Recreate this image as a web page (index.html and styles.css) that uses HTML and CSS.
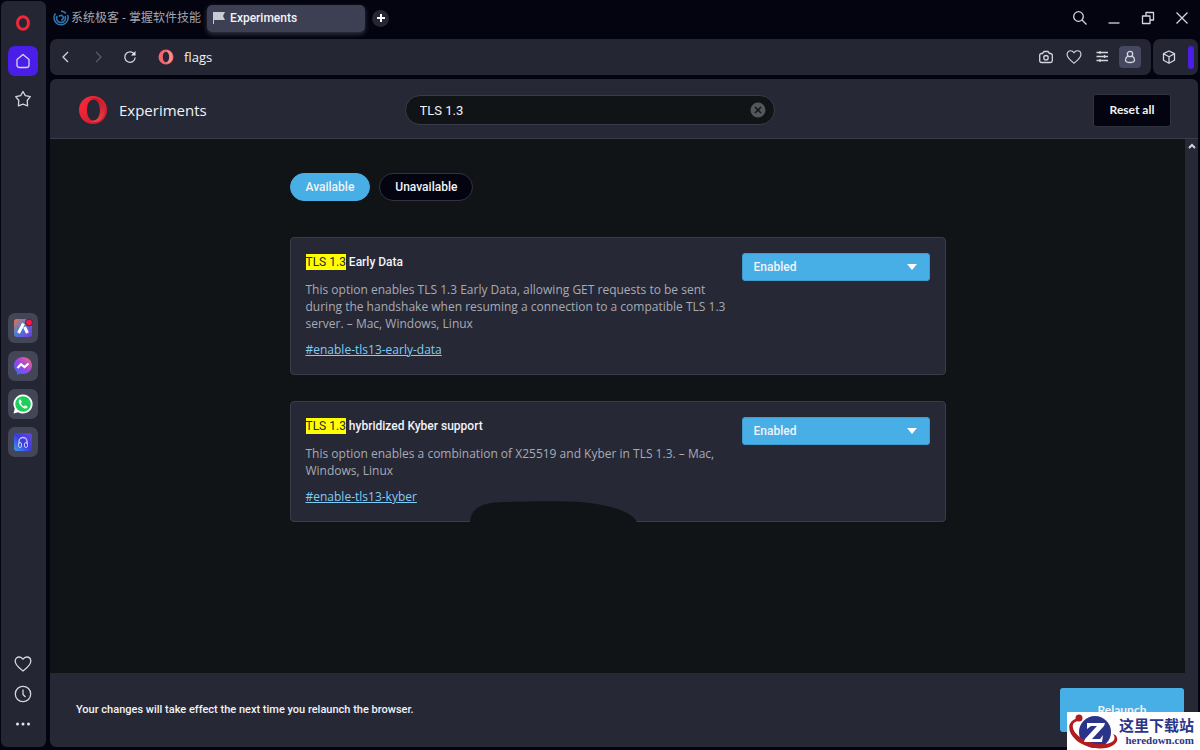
FILE: index.html
```html
<!DOCTYPE html>
<html lang="en">
<head>
    <meta charset="UTF-8">
    <meta name="viewport" content="width=device-width, initial-scale=1.0">
    <title>Experiments</title>
    <link rel="stylesheet" href="styles.css">
</head>
<body>
    <!-- shared shapes -->
    <svg class="defs" width="0" height="0" aria-hidden="true">
        <defs>
            <linearGradient id="operaRed" x1="0" y1="0" x2="1" y2="1">
                <stop offset="0" stop-color="#ff2a3c"/>
                <stop offset="1" stop-color="#c51a2c"/>
            </linearGradient>
            <linearGradient id="operaInner" x1="0" y1="0" x2="0" y2="1">
                <stop offset="0" stop-color="#a80f22"/>
                <stop offset="1" stop-color="#ff5a5a"/>
            </linearGradient>
            <linearGradient id="aria" x1="0" y1="0" x2="1" y2="1">
                <stop offset="0" stop-color="#f0704a"/>
                <stop offset="0.45" stop-color="#4a7fd0"/>
                <stop offset="1" stop-color="#7a35e0"/>
            </linearGradient>
            <linearGradient id="messenger" x1="0" y1="1" x2="1" y2="0">
                <stop offset="0" stop-color="#2b6dff"/>
                <stop offset="0.5" stop-color="#a044e8"/>
                <stop offset="1" stop-color="#ff6a6a"/>
            </linearGradient>
            <linearGradient id="player" x1="0" y1="1" x2="1" y2="0">
                <stop offset="0" stop-color="#3aa0f0"/>
                <stop offset="0.5" stop-color="#3a3ae0"/>
                <stop offset="1" stop-color="#6a48d8"/>
            </linearGradient>
        </defs>
        <symbol id="heart" viewBox="0 0 18 18">
            <path d="M9 16C6 13.5 1.2 10.200 1.200 6.200 1.200 3.700 3 2 5.200 2 6.900 2 8.200 2.900 9 4.300 9.800 2.900 11.100 2 12.800 2 15 2 16.800 3.700 16.800 6.200 16.800 10.200 12 13.500 9 16Z"/>
        </symbol>
        <symbol id="opera" viewBox="0 0 30 30">
            <path fill-rule="evenodd" fill="url(#operaRed)" d="M15 1A14 14 0 1 0 15 29A14 14 0 1 0 15 1ZM15.500 4.500C19.500 4.500 22 9 22 15S19.500 25.500 15.500 25.500 9 21 9 15 11.500 4.500 15.500 4.500Z"/>
            <path fill="url(#operaInner)" d="M12 4C18 1 27 5 27 15S18 29 12 26C19 27 22 21 22 15S19 3 12 4Z" opacity="0.6"/>
        </symbol>
    </svg>

    <div class="browser">
        <nav class="sidebar" aria-label="Sidebar">
            <div class="side-group">
                <button class="side-btn" aria-label="Opera menu">
                    <svg width="16" height="16" viewBox="0 0 16 16"><ellipse cx="8" cy="8" rx="5.500" ry="6.200" fill="none" stroke="#ee2838" stroke-width="3"/></svg>
                </button>
                <button class="side-btn active" aria-label="Home">
                    <svg class="line" width="16" height="16" viewBox="0 0 16 16"><path d="M2 6.500 8 1.500 14 6.500V12A2.500 2.500 0 0 1 11.500 14.500H4.500A2.500 2.500 0 0 1 2 12Z"/></svg>
                </button>
                <button class="side-btn" aria-label="Speed dials">
                    <svg class="line" width="18" height="18" viewBox="0 0 18 18"><path d="M9 1.500 11.300 5.600 16.300 6.700 13.200 10.500 13.600 15.800 9 14.200 4.400 15.800 4.800 10.500 1.700 6.700 6.700 5.600Z"/></svg>
                </button>
            </div>
            <div class="side-group apps">
                <button class="side-btn app" aria-label="Aria">
                    <svg width="20" height="20" viewBox="0 0 20 20">
                        <rect x="1" y="1" width="18" height="18" rx="3" fill="url(#aria)"/>
                        <path d="M5.500 15 10.500 5.500M11.500 9 14.500 15" fill="none" stroke="#fff" stroke-width="3"/>
                        <circle cx="16" cy="4.500" r="3.500" fill="#f01e46" stroke="#4a2440"/>
                    </svg>
                </button>
                <button class="side-btn app" aria-label="Messenger">
                    <svg width="20" height="20" viewBox="0 0 20 20">
                        <path d="M10 1C4.800 1 1 4.700 1 9.500 1 12 2 14.200 3.800 15.700L4 19 7 17.700C8 18 9 18 10 18 15.200 18 19 14.300 19 9.500S15.200 1 10 1Z" fill="url(#messenger)"/>
                        <path d="M4.500 12 8 8.200 11.500 11 15.500 7.500" fill="none" stroke="#fff" stroke-width="2.200"/>
                    </svg>
                </button>
                <button class="side-btn app" aria-label="WhatsApp">
                    <svg width="20" height="20" viewBox="0 0 20 20">
                        <path d="M10 .5A9.500 9.500 0 0 0 1.800 14.800L.5 19.500 5.300 18.200A9.500 9.500 0 1 0 10 .5Z" fill="#fff"/>
                        <circle cx="10" cy="10" r="7.800" fill="#1ccf5a"/>
                        <path d="M6.500 5.500C5 7 5.700 9.500 8 12S13 15.500 14.500 13.500L14.200 12.200 12 11.200 11 12.400C9.500 11.800 8.400 10.700 7.800 9.200L8.800 8.200 8 5.700Z" fill="#fff"/>
                    </svg>
                </button>
                <button class="side-btn app" aria-label="Player">
                    <svg width="20" height="20" viewBox="0 0 20 20">
                        <rect x="1" y="1" width="18" height="18" rx="3" fill="url(#player)"/>
                        <path d="M6 12V9.500A4 4 0 0 1 14 9.500V12" fill="none" stroke="#c8c4f4" stroke-width="1.300"/>
                        <rect x="5.500" y="10.500" width="3" height="5" rx="1.500" fill="none" stroke="#c8c4f4"/>
                        <rect x="11.500" y="10.500" width="3" height="5" rx="1.500" fill="none" stroke="#c8c4f4"/>
                    </svg>
                </button>
            </div>
            <div class="side-group bottom">
                <button class="side-btn" aria-label="Bookmarks">
                    <svg class="line" width="18" height="18"><use href="#heart"/></svg>
                </button>
                <button class="side-btn" aria-label="History">
                    <svg class="line" width="18" height="18" viewBox="0 0 18 18"><circle cx="9" cy="9" r="7.700"/><path d="M9 4.500V9.500L11.500 12"/></svg>
                </button>
                <button class="side-btn" aria-label="More">
                    <svg width="18" height="18" viewBox="0 0 18 18" fill="#e4e6ee"><circle cx="3.500" cy="9" r="1.500"/><circle cx="9" cy="9" r="1.500"/><circle cx="14.500" cy="9" r="1.500"/></svg>
                </button>
            </div>
        </nav>

        <div class="window">
            <div class="tabs">
                <button class="tab">
                    <svg width="16" height="16" viewBox="0 0 16 16" fill="none" stroke="#2f74ad" stroke-width="1.700">
                        <path d="M2.500 3.500A7 7 0 1 0 14.500 5"/><path d="M13 3.500A6.500 6.500 0 0 0 8 1.200"/><path d="M4 6A4.500 4.500 0 1 0 12 6"/><path d="M6 6.500A2.300 2.300 0 1 1 8 10"/>
                    </svg>
                    系统极客 - 掌握软件技能
                </button>
                <button class="tab current">
                    <svg width="14" height="14" viewBox="0 0 14 14" fill="#c8cad4"><path d="M1 1H2V13H1ZM2 1H13L11 5 13 9H2Z"/></svg>
                    Experiments
                </button>
                <button class="new-tab" aria-label="New tab">
                    <svg width="10" height="10" viewBox="0 0 10 10" stroke="#fff" stroke-width="2"><path d="M5 1V9M1 5H9"/></svg>
                </button>
                <div class="window-controls">
                    <button aria-label="Search tabs"><svg class="line" width="16" height="16" viewBox="0 0 16 16"><circle cx="6.500" cy="6.500" r="4.800"/><path d="M10 10 14.500 14.500"/></svg></button>
                    <button aria-label="Minimize"><svg class="line" width="16" height="16" viewBox="0 0 16 16"><path d="M2.500 13H13.500"/></svg></button>
                    <button aria-label="Restore"><svg class="line" width="16" height="16" viewBox="0 0 16 16"><path d="M2.500 6H10V13.500H2.500ZM6 6V2.500H13.500V10H10"/></svg></button>
                    <button aria-label="Close"><svg class="line" width="16" height="16" viewBox="0 0 16 16"><path d="M2.500 2.500 13.500 13.500M13.500 2.500 2.500 13.500"/></svg></button>
                </div>
            </div>

            <div class="toolbar">
                <div class="address">
                    <button aria-label="Back"><svg class="line" width="16" height="16" viewBox="0 0 16 16"><path d="M10 3 5 8 10 13"/></svg></button>
                    <button class="off" aria-label="Forward" disabled><svg class="line" width="16" height="16" viewBox="0 0 16 16"><path d="M6 3 11 8 6 13"/></svg></button>
                    <button aria-label="Reload"><svg class="line" width="16" height="16" viewBox="0 0 16 16"><path d="M12.800 6A5.200 5.200 0 1 0 13.200 8.500"/><path d="M13.500 2V6.500H9Z" fill="#e4e6ee" stroke="none"/></svg></button>
                    <svg class="site-icon" width="16" height="16" viewBox="0 0 16 16"><path fill="#f4646c" fill-rule="evenodd" d="M8 .5A7.500 7.500 0 1 0 8 15.500 7.500 7.500 0 1 0 8 .5ZM8 2.800C10 2.800 11.200 5 11.200 8S10 13.200 8 13.200 4.800 11 4.800 8 6 2.800 8 2.800Z"/><path fill="#f7a6a4" opacity="0.6" d="M8 2C12 1 14.500 4.500 14.500 8S12 15 8 14C10 13.200 11.200 11 11.200 8S10 2.800 8 2Z"/></svg>
                    <span class="url">flags</span>
                    <div class="address-tools">
                        <button aria-label="Snapshot"><svg class="line" width="16" height="16" viewBox="0 0 16 16"><path d="M3.500 4.500H4.500L6 2.500H10L11.500 4.500H12.500A1.800 1.800 0 0 1 14.300 6.300V11.700A1.800 1.800 0 0 1 12.500 13.500H3.500A1.800 1.800 0 0 1 1.700 11.700V6.300A1.800 1.800 0 0 1 3.500 4.500Z"/><circle cx="8" cy="8.700" r="2.200"/></svg></button>
                        <button aria-label="Add to bookmarks"><svg class="line" width="16" height="16"><use href="#heart"/></svg></button>
                        <button aria-label="Easy setup"><svg class="line" width="16" height="16" viewBox="0 0 16 16"><path d="M2.500 3.500H14M2.500 7.500H14M2.500 11.500H14M6 2V5M10.500 6V9M6 10V13"/></svg></button>
                        <button class="profile" aria-label="Profile"><svg class="line" width="16" height="16" viewBox="0 0 16 16"><circle cx="8" cy="5" r="2.700"/><path d="M6 7.200C4.300 8 3.500 9.300 3.500 11 3.500 12.800 4.800 13.500 8 13.500S12.500 12.800 12.500 11C12.500 9.300 11.700 8 10 7.200"/></svg></button>
                    </div>
                </div>
                <div class="extensions">
                    <button aria-label="Extensions"><svg class="line" width="16" height="16" viewBox="0 0 16 16"><path d="M8 2 13.500 4.700V11.200L8 14.200 2.500 11.200V4.700ZM2.500 4.700 8 7.700 13.500 4.700M8 7.700V14.200"/></svg></button>
                    <span class="mark"></span>
                </div>
            </div>

            <div class="page">
                <header class="header">
                    <div class="brand">
                        <svg width="30" height="30"><use href="#opera"/></svg>
                        <h1>Experiments</h1>
                    </div>
                    <div class="search">
                        <input type="text" aria-label="Search flags" value="TLS 1.3">
                        <button aria-label="Clear search">
                            <svg width="16" height="16" viewBox="0 0 16 16"><circle cx="8" cy="8" r="7.500" fill="#54565b"/><path d="M5 5 11 11M11 5 5 11" stroke="#111416" stroke-width="1.500"/></svg>
                        </button>
                    </div>
                    <button class="reset">Reset all</button>
                </header>

                <div class="body">
                    <main class="content">
                        <div class="filters">
                            <button class="pill selected">Available</button>
                            <button class="pill">Unavailable</button>
                        </div>

                        <section class="card">
                            <div class="info">
                                <h2><mark>TLS 1.3</mark> Early Data</h2>
                                <p>This option enables TLS 1.3 Early Data, allowing GET requests to be sent during the handshake when resuming a connection to a compatible TLS 1.3 server. – Mac, Windows, Linux</p>
                                <a href="#enable-tls13-early-data" id="enable-tls13-early-data">#enable-tls13-early-data</a>
                            </div>
                            <div class="select">
                                <select aria-labelledby="enable-tls13-early-data">
                                    <option>Default</option>
                                    <option selected>Enabled</option>
                                    <option>Disabled</option>
                                </select>
                            </div>
                        </section>

                        <section class="card">
                            <div class="info">
                                <h2><mark>TLS 1.3</mark> hybridized Kyber support</h2>
                                <p>This option enables a combination of X25519 and Kyber in TLS 1.3. – Mac, Windows, Linux</p>
                                <a href="#enable-tls13-kyber" id="enable-tls13-kyber">#enable-tls13-kyber</a>
                            </div>
                            <div class="select">
                                <select aria-labelledby="enable-tls13-kyber">
                                    <option>Default</option>
                                    <option selected>Enabled</option>
                                    <option>Disabled</option>
                                </select>
                            </div>
                            <svg class="blot" width="170" height="23" viewBox="0 0 170 23"><path fill="#111416" d="M1 23C1 12 8 5 22 3 40 1 90 1 112 2 140 4 166 13 168 23Z"/></svg>
                        </section>
                    </main>
                    <div class="scrollbar">
                        <svg width="8" height="6" viewBox="0 0 8 6" fill="none" stroke="#d0d2da" stroke-width="2"><path d="M1 5 4 2 7 5"/></svg>
                    </div>
                </div>

                <footer class="footer">
                    <p>Your changes will take effect the next time you relaunch the browser.</p>
                    <button class="relaunch">Relaunch</button>
                </footer>
            </div>
        </div>
    </div>

    <div class="watermark">
        <svg width="52" height="38" viewBox="0 0 52 38">
            <circle cx="28" cy="20" r="16" fill="#2b3488"/>
            <path d="M12 6C0 8-1 19 9 28 20 38 45 40 50 29 51 25 49 23 46 22 50 27 46 32 37 32 24 33 8 25 6 16 5 11 8 9 13 9Z" fill="#b01c20"/>
            <circle cx="12" cy="6" r="3.500" fill="#b01c20"/>
            <path d="M20 11H38L37 14 25 27H33L36 23 35 30H17L18 27 30 14H24L20 17Z" fill="#fff"/>
        </svg>
        <div class="watermark-text">
            <span class="name">这里下载站</span>
            <span class="domain">heredown.com</span>
        </div>
    </div>
</body>
</html>
```
FILE: styles.css
```css
* {
    box-sizing: border-box;
}
body {
    margin: 0;
    background: #03040f;
    color: #f2f3f7;
    font-family: "Open Sans", "Noto Sans", "Noto Sans CJK SC", sans-serif;
    font-size: 12px;
    line-height: 18px;
}
h1, h2, p {
    margin: 0;
}
button {
    display: flex;
    align-items: center;
    justify-content: center;
    padding: 0;
    border: none;
    background: none;
    color: inherit;
    font: inherit;
    cursor: pointer;
}
.defs {
    position: absolute;
}
.line {
    fill: none;
    stroke: #d4d6de;
    stroke-width: 1.3;
    stroke-linejoin: round;
}
.browser {
    display: flex;
    gap: 4px;
    height: 100vh;
    padding: 0 2px 3px 1px;
}

/* sidebar */
.sidebar {
    display: flex;
    flex-direction: column;
    justify-content: space-between;
    width: 45px;
    margin-top: 1px;
    padding: 7px 1px 8px 0;
    border-radius: 6px;
    background: #242733;
}
.side-group {
    display: flex;
    flex-direction: column;
    align-items: center;
    gap: 8px;
}
.side-group.bottom {
    gap: 0;
}
.side-group.apps {
    padding-top: 7px;
}
.side-btn {
    width: 30px;
    height: 30px;
    border-radius: 7px;
}
.side-btn.active {
    background: #4a1ee8;
}
.side-btn.app {
    background: #434657;
}

/* tabs */
.window {
    display: flex;
    flex: 1;
    flex-direction: column;
    min-width: 0;
}
.tabs {
    display: flex;
    align-items: center;
    height: 39px;
    padding: 0 8px 3px 3px;
}
.tab {
    justify-content: flex-start;
    gap: 2px;
    height: 27px;
    margin-right: 6px;
    color: #a4a7b2;
}
.tab.current {
    gap: 4px;
    width: 158px;
    margin-right: 7px;
    padding: 0 5px;
    border-radius: 5px;
    background: #3d3f52;
    box-shadow: 0 2px 5px #343648;
    color: #f2f3f7;
    font-family: "Roboto", "Open Sans", sans-serif;
    font-weight: 500;
}
.new-tab {
    width: 17px;
    height: 17px;
    border-radius: 50%;
    background: #242733;
}
.window-controls {
    display: flex;
    gap: 18px;
    margin-left: auto;
}

/* address bar */
.toolbar {
    display: flex;
    gap: 2px;
    height: 36px;
    margin-bottom: 4px;
}
.address, .extensions {
    display: flex;
    align-items: center;
    border-radius: 7px;
    background: #242733;
}
.address {
    flex: 1;
    gap: 16px;
    padding: 0 10px 0 8px;
}
.off {
    opacity: 0.3;
}
.site-icon {
    margin-left: 4px;
}
.url {
    margin-left: -6px;
    font-size: 13px;
}
.address-tools {
    display: flex;
    align-items: center;
    gap: 12px;
    margin-left: auto;
}
.profile {
    width: 22px;
    height: 22px;
    margin-left: -3px;
    border-radius: 4px;
    background: #454860;
}
.extensions {
    justify-content: space-between;
    width: 45px;
    padding: 0 4px 0 8px;
}
.mark {
    width: 6px;
    height: 23px;
    border-radius: 3px;
    background: #4a1ee8;
}

/* page */
.page {
    display: flex;
    flex: 1;
    flex-direction: column;
    min-height: 0;
    overflow: hidden;
    border-radius: 6px;
    background: #262836;
}
/* the field sits left of centre, toward the brand */
.header {
    display: grid;
    grid-template-columns: 14fr 370px 17fr;
    align-items: center;
    height: 60px;
    padding: 3px 27px 0 28px;
    border-bottom: 1px solid #3a3d49;
}
.brand {
    display: flex;
    align-items: center;
    gap: 11px;
}
.brand h1 {
    font-size: 15px;
    font-weight: 400;
}
.search {
    display: flex;
    align-items: center;
    height: 30px;
    padding: 0 8px 0 14px;
    border: 1px solid #3a3d49;
    border-radius: 15px;
    background: #111416;
}
.search input {
    flex: 1;
    min-width: 0;
    padding: 0;
    border: none;
    outline: none;
    background: none;
    color: #f2f3f7;
    font: 13px "Roboto", Arial, sans-serif;
}
.reset {
    justify-self: end;
    width: 78px;
    height: 33px;
    border: 1px solid #30333f;
    border-radius: 3px;
    background: #03040f;
    font-family: "Lato", "Open Sans", sans-serif;
    font-weight: 700;
}
.body {
    display: flex;
    flex: 1;
    min-height: 0;
    background: #111416;
}
.content {
    flex: 1;
    padding: 34px 0;
}
.filters, .card {
    width: 656px;
    max-width: 100%;
    margin: 0 auto;
}
.filters {
    display: flex;
    gap: 9px;
    margin-bottom: 36px;
}
.pill {
    height: 28px;
    padding: 0 15px;
    border: 1px solid #343240;
    border-radius: 14px;
    background: #03040f;
    font-family: "Roboto", Arial, sans-serif;
    font-weight: 500;
}
.pill.selected {
    border-color: #47aee6;
    background: #47aee6;
}
.card {
    position: relative;
    display: flex;
    align-items: flex-start;
    justify-content: space-between;
    margin-bottom: 26px;
    padding: 15px;
    border: 1px solid #3a3d49;
    border-radius: 4px;
    background: #262836;
}
.info {
    display: flex;
    flex-direction: column;
    align-items: flex-start;
    gap: 9px;
    width: 424px;
}
.info h2 {
    font-family: "Roboto", "Open Sans", sans-serif;
    font-size: 12px;
    line-height: 19px;
    font-weight: 500;
}
.info mark {
    padding: 1px 0;
    background: #ff0;
    color: #252835;
    font-weight: 400;
}
.info p {
    color: #a8abb4;
    line-height: 17px;
}
.info a {
    color: #7fcdf5;
}
.select {
    display: grid;
    align-items: center;
    width: 188px;
}
.select select, .select::after {
    grid-area: 1 / 1;
}
.select select {
    height: 28px;
    padding: 0 11px;
    border: 1px solid #3f9bcf;
    border-radius: 3px;
    appearance: none;
    background: #47aee6;
    color: #f2f3f7;
    font: 500 12px "Roboto", Arial, sans-serif;
}
.select::after {
    content: "";
    justify-self: end;
    margin-right: 13px;
    border: 5px solid transparent;
    border-top: 6px solid #fff;
    border-bottom: none;
    pointer-events: none;
}
/* dark patch over the lower edge of the second card */
.blot {
    position: absolute;
    bottom: -2px;
    left: 178px;
}
.scrollbar {
    width: 13px;
    padding-top: 3px;
    background: #262836;
    line-height: 6px;
    text-align: center;
}
.footer {
    display: flex;
    align-items: center;
    justify-content: space-between;
    height: 74px;
    padding: 0 14px 0 26px;
}
.footer p {
    font-family: "Roboto", "Open Sans", sans-serif;
    font-size: 11px;
    font-weight: 500;
}
.relaunch {
    width: 124px;
    height: 44px;
    border-radius: 3px;
    background: #47aee6;
    font-family: "Lato", "Open Sans", sans-serif;
    font-weight: 700;
}
.watermark {
    position: fixed;
    right: 0;
    bottom: 0;
    display: flex;
    width: 133px;
    height: 38px;
    background: #fff;
    color: #2b3488;
    font-family: "Liberation Serif", "Noto Sans CJK SC", serif;
    font-weight: 700;
}
.watermark-text {
    display: flex;
    flex-direction: column;
    padding-top: 5px;
}
.name {
    font-size: 15px;
    line-height: 18px;
}
.domain {
    font-size: 11px;
    line-height: 10px;
    text-align: right;
}
```
